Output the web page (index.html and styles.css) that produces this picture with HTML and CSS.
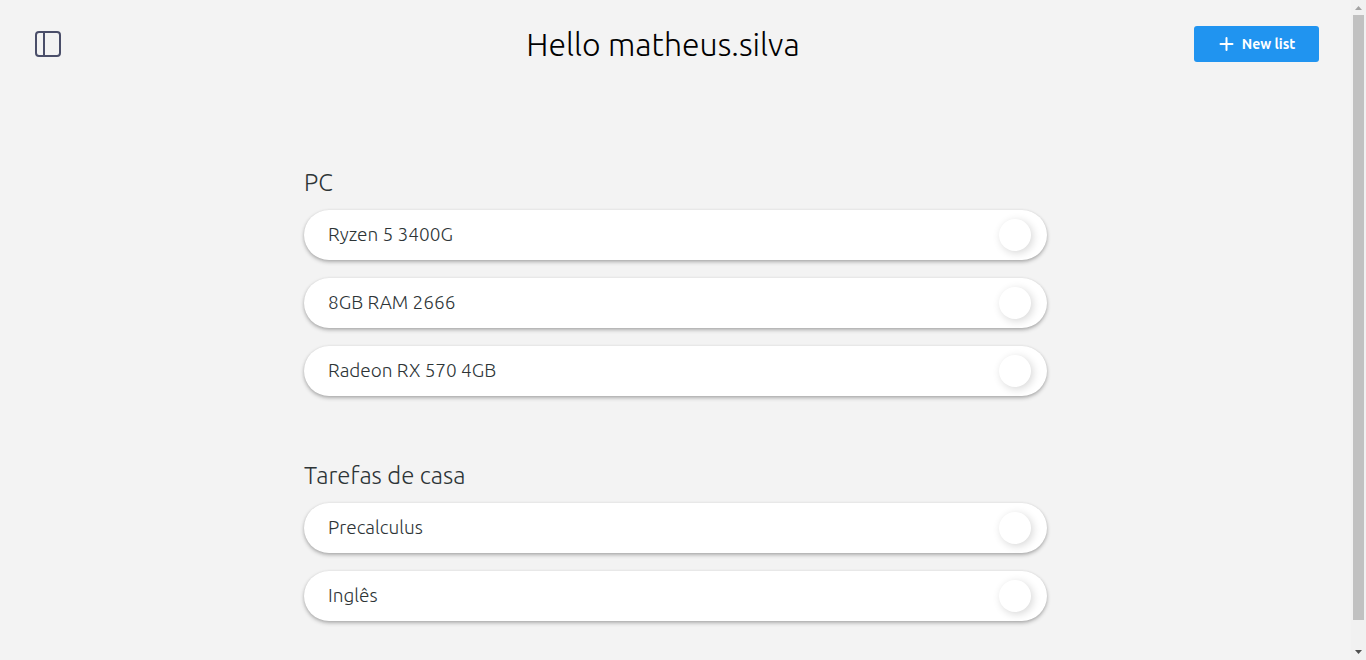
FILE: index.html
```html
<!DOCTYPE html>
<html lang="en">
<head>
<meta charset="utf-8">
<meta name="viewport" content="width=device-width, initial-scale=1">
<title>Lists</title>
<link rel="stylesheet" href="styles.css">
</head>
<body>
<div class="page">
  <header class="header">
    <div class="header-side">
      <button class="menu-button" type="button" aria-label="Toggle sidebar">
        <svg width="32" height="32" viewBox="0 0 32 32" fill="none" stroke="#4a4e69" stroke-width="2">
          <rect x="4" y="4" width="24" height="24" rx="3"/>
          <path d="M12 4v24"/>
        </svg>
      </button>
    </div>
    <h1 class="greeting">Hello matheus.silva</h1>
    <button class="new-list" type="button">
      <svg width="16" height="16" viewBox="0 0 16 16" fill="none" stroke="#fff" stroke-width="2" stroke-linecap="round" aria-hidden="true">
        <path d="M8.500 2v12M2.500 8h12"/>
      </svg>
      New list
    </button>
  </header>
  <main class="lists">
    <section class="list">
      <h2 class="list-title">PC</h2>
      <ul class="items">
        <li><label class="item">Ryzen 5 3400G<input class="check" type="checkbox"></label></li>
        <li><label class="item">8GB RAM 2666<input class="check" type="checkbox"></label></li>
        <li><label class="item">Radeon RX 570 4GB<input class="check" type="checkbox"></label></li>
      </ul>
    </section>
    <section class="list">
      <h2 class="list-title">Tarefas de casa</h2>
      <ul class="items">
        <li><label class="item">Precalculus<input class="check" type="checkbox"></label></li>
        <li><label class="item">Inglês<input class="check" type="checkbox"></label></li>
      </ul>
    </section>
  </main>
</div>
<div class="scrollbar" aria-hidden="true">
  <svg class="arrow" viewBox="0 0 15 15" fill="#a3a3a3"><path d="M7.500 6L11 10H4z"/></svg>
  <div class="track"><div class="thumb"></div></div>
  <svg class="arrow" viewBox="0 0 15 15" fill="#505050"><path d="M7.500 9L11 5H4z"/></svg>
</div>
</body>
</html>
```
FILE: styles.css
```css
* {
  box-sizing: border-box;
}

body {
  margin: 0;
  background: #f3f3f3;
  font-family: Ubuntu, "Open Sans", sans-serif;
  font-weight: 300;
  color: #2d3436;
}

.page {
  margin-right: 15px;
}

.header {
  display: flex;
  align-items: center;
  justify-content: space-between;
  padding: 24px 32px;
}

.header-side {
  width: 100px;
}

.menu-button {
  display: flex;
  width: 32px;
  height: 32px;
  padding: 0;
  border: 0;
  background: none;
  cursor: pointer;
}

.greeting {
  margin: 0;
  font-size: 32px;
  line-height: 40px;
  font-weight: 300;
  color: #000;
}

.new-list {
  display: flex;
  align-items: center;
  justify-content: center;
  gap: 8px;
  width: 125px;
  height: 36px;
  padding: 0;
  border: 0;
  border-radius: 3px;
  background: #2094f0;
  color: #fff;
  font-family: inherit;
  font-size: 14px;
  font-weight: 600;
  cursor: pointer;
}

.lists {
  display: flex;
  flex-direction: column;
  gap: 64px;
  width: 55%;
  margin: 79px auto 0;
  padding-bottom: 32px;
}

.list-title {
  margin: 0 0 12px;
  font-size: 24px;
  line-height: 31px;
  font-weight: 300;
}

.items {
  display: flex;
  flex-direction: column;
  gap: 18px;
  margin: 0;
  padding: 0;
  list-style: none;
}

.item {
  display: flex;
  align-items: flex-start;
  justify-content: space-between;
  padding: 9px 16px 9px 24px;
  border-radius: 25px;
  background: #fff;
  box-shadow: 0 1px 3px rgba(0, 0, 0, 0.12), 0 2px 4px rgba(0, 0, 0, 0.24);
  font-size: 19px;
  line-height: 30px;
  cursor: pointer;
}

.check {
  appearance: none;
  width: 32px;
  height: 32px;
  margin: 0;
  border-radius: 50%;
  background: #fff;
  box-shadow: 2px 2px 8px rgba(0, 0, 0, 0.16);
  cursor: pointer;
}

.check:checked {
  background: #2094f0;
}

.scrollbar {
  position: fixed;
  top: 0;
  right: 0;
  bottom: 0;
  display: flex;
  flex-direction: column;
  width: 15px;
  background: #f1f1f1;
}

.arrow {
  width: 15px;
  height: 15px;
}

.track {
  flex: 1;
  padding: 0 2px;
}

.thumb {
  height: 96%;
  background: #c1c1c1;
}
```
